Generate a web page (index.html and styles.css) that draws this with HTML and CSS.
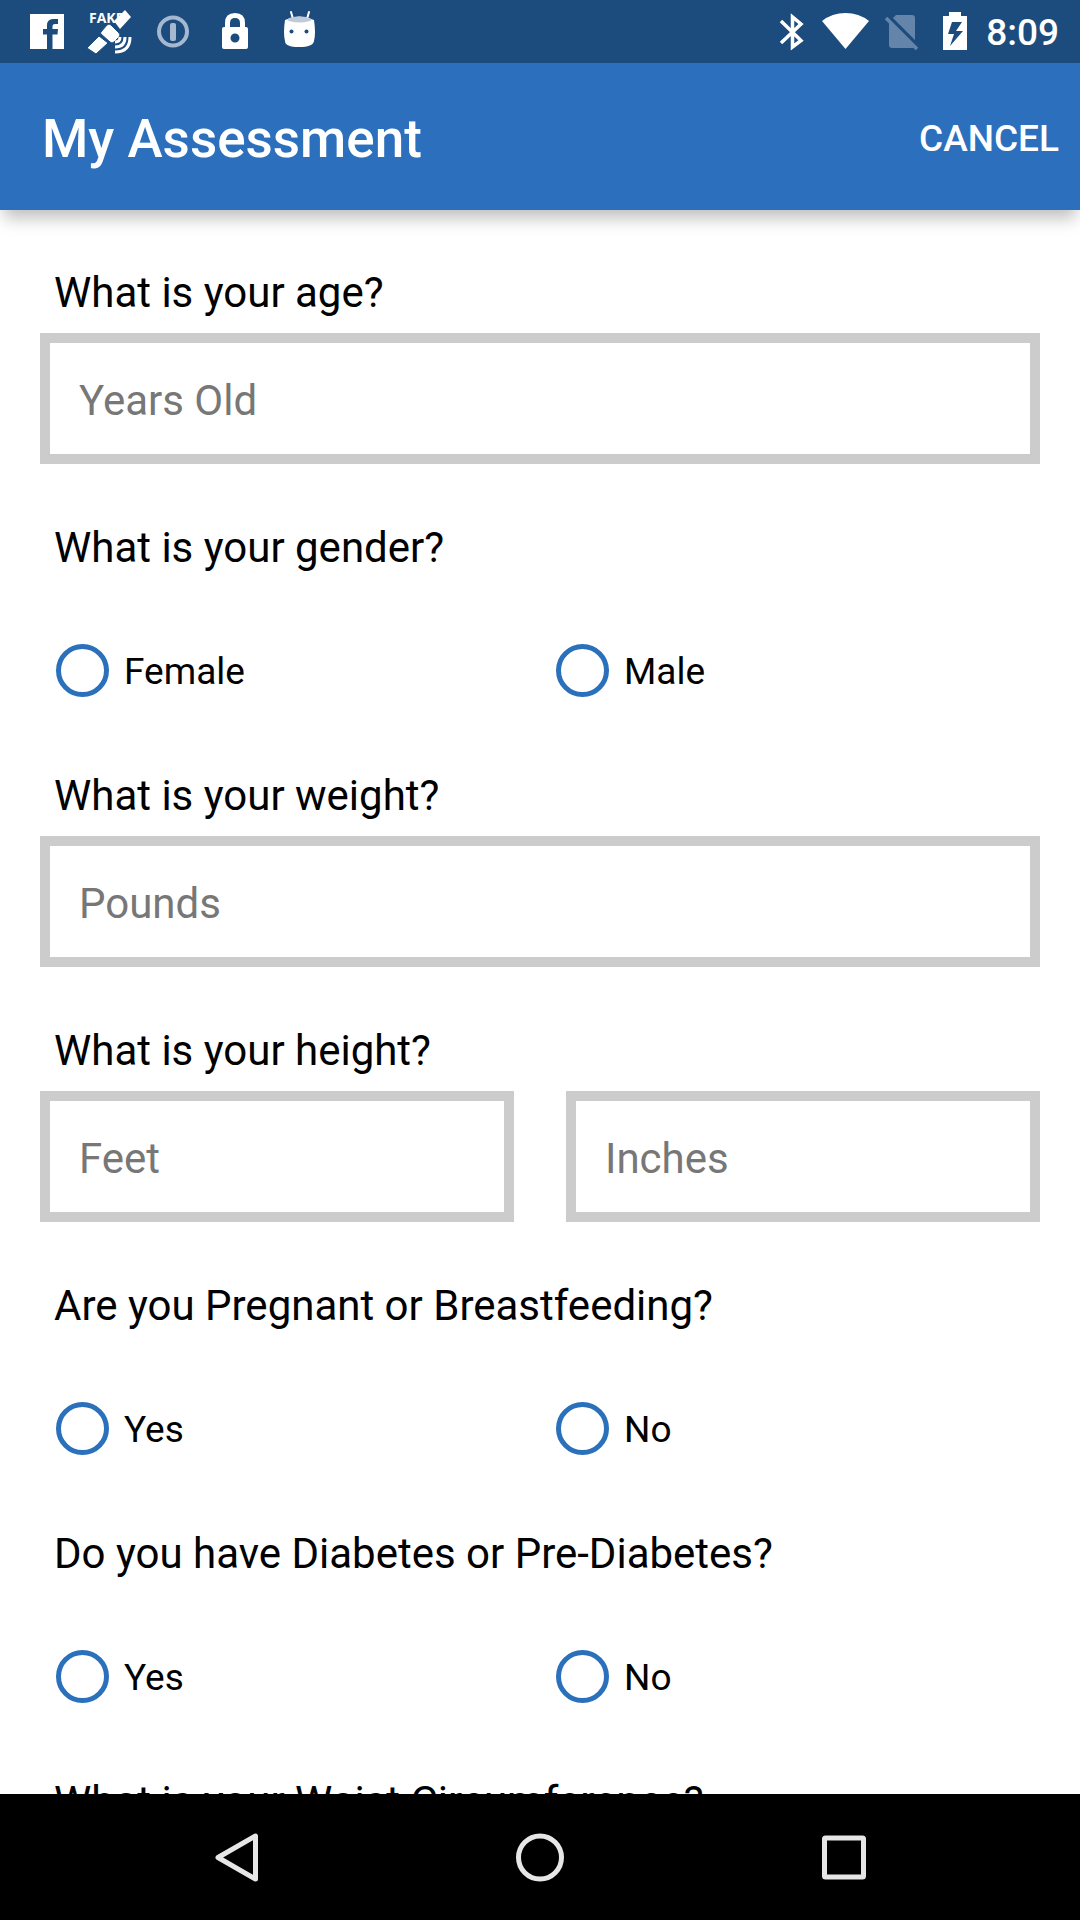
FILE: index.html
```html
<!DOCTYPE html>
<html lang="en">
<head>
<meta charset="utf-8">
<meta name="viewport" content="width=device-width, initial-scale=1">
<title>My Assessment</title>
<link rel="stylesheet" href="styles.css">
</head>
<body>
<div class="status-bar">
  <div class="status-group">
    <svg class="notice-icon" viewBox="0 0 63 63" aria-label="Facebook">
      <path fill="#fff" d="M14 14H48V49H36.500V34.500H41.500L42 29H36.500V26Q36.500 24 39 24H42V19H37Q31 19 31 25.500V29H27V34.500H31V49H14Z"/>
    </svg>
    <svg class="notice-icon" viewBox="0 0 63 63" aria-label="Mock location">
      <text class="notice-text" x="10" y="23">FAKE</text>
      <path fill="#fff" stroke="#1c4c7e" stroke-width="1" d="M8 48 20 36 29 43 17 54Z"/>
      <path fill="#fff" d="M35 21 46 10 52 17 41 29Z"/>
      <path fill="#fff" stroke="#1c4c7e" stroke-width="1" d="M22 32 28 25Q30 23 32 25L40 33Q42 35 40 37L35 42Q33 44 31 42L22 34Q21 33 22 32Z"/>
      <path fill="none" stroke="#fff" stroke-width="3" d="M51 37Q51 52 36 52M46 37Q46 47 36 47M41 37Q41 42 36 42"/>
    </svg>
    <svg class="notice-icon" viewBox="0 0 63 63" aria-label="Password manager">
      <circle cx="31" cy="31.500" r="14" fill="none" stroke="#a6b7d0" stroke-width="4"/>
      <rect x="28" y="23" width="6" height="18" rx="2" fill="#a6b7d0"/>
    </svg>
    <svg class="notice-icon" viewBox="0 0 63 63" aria-label="Locked">
      <path fill="none" stroke="#fff" stroke-width="5" d="M22.500 28V23Q22.500 15.500 30 15.500T37.500 23V28"/>
      <path fill="#fff" fill-rule="evenodd" d="M19 27H41Q43 27 43 29V47Q43 49 41 49H19Q17 49 17 47V29Q17 27 19 27ZM30 33.500A4.500 4.500 0 1 0 30 42.500A4.500 4.500 0 1 0 30 33.500Z"/>
    </svg>
    <svg class="notice-icon" viewBox="0 0 63 63" aria-label="Android">
      <path stroke="#fff" stroke-width="2" stroke-linecap="round" d="M23 12 25 19M41 12 39 19"/>
      <path fill="#fff" d="M17 20Q31 13 46 20Q48 33 46 41Q45 47 31 47T17 41Q15 33 17 20Z"/>
      <ellipse cx="31.500" cy="19.500" rx="12" ry="3" fill="#c0cad6"/>
      <circle cx="23.500" cy="31.500" r="2" fill="#1c4c7e"/>
      <circle cx="38.500" cy="31.500" r="2" fill="#1c4c7e"/>
    </svg>
  </div>
  <div class="status-group">
    <svg class="system-icon" viewBox="0 0 55 63" aria-label="Bluetooth">
      <path fill="none" stroke="#fff" stroke-width="3.500" d="M16 21 36 40.500 27.500 47V17L36 24 16 43"/>
    </svg>
    <svg class="system-icon" viewBox="0 0 55 63" aria-label="Wi-Fi">
      <path fill="#fff" d="M2 21Q12 13 25.500 13T49 21L25.500 49Z"/>
    </svg>
    <svg class="system-icon" viewBox="0 0 55 63" aria-label="No SIM card">
      <path fill="#6484a9" d="M21 15H37Q40 15 40 18V48H17Q14 48 14 45V22Z"/>
      <path stroke="#1c4c7e" stroke-width="4" d="M13 16 44 47"/>
      <path stroke="#6484a9" stroke-width="3.500" d="M11 18 42 49"/>
    </svg>
    <svg class="system-icon" viewBox="0 0 55 63" aria-label="Battery charging">
      <path fill="#fff" fill-rule="evenodd" d="M19 12H31V16H37V50H13V16H19ZM22 22 18 34H24L20 46 33 31H26L32 22Z"/>
    </svg>
    <time class="clock">8:09</time>
  </div>
</div>
<header class="app-bar">
  <h1 class="app-title">My Assessment</h1>
  <button class="cancel" type="button">CANCEL</button>
</header>
<main class="content">
  <form class="form">
    <div class="field">
      <label class="question" for="age">What is your age?</label>
      <input class="entry" id="age" type="text" inputmode="numeric" placeholder="Years Old">
    </div>
    <fieldset class="field">
      <legend class="question">What is your gender?</legend>
      <div class="choices">
        <label class="choice"><input class="radio" type="radio" name="gender"><span class="choice-text">Female</span></label>
        <label class="choice"><input class="radio" type="radio" name="gender"><span class="choice-text">Male</span></label>
      </div>
    </fieldset>
    <div class="field">
      <label class="question" for="weight">What is your weight?</label>
      <input class="entry" id="weight" type="text" inputmode="numeric" placeholder="Pounds">
    </div>
    <div class="field">
      <label class="question" for="feet">What is your height?</label>
      <div class="entry-pair">
        <input class="entry" id="feet" type="text" inputmode="numeric" placeholder="Feet">
        <input class="entry" type="text" inputmode="numeric" placeholder="Inches" aria-label="Height, inches">
      </div>
    </div>
    <fieldset class="field">
      <legend class="question">Are you Pregnant or Breastfeeding?</legend>
      <div class="choices">
        <label class="choice"><input class="radio" type="radio" name="pregnant"><span class="choice-text">Yes</span></label>
        <label class="choice"><input class="radio" type="radio" name="pregnant"><span class="choice-text">No</span></label>
      </div>
    </fieldset>
    <fieldset class="field">
      <legend class="question">Do you have Diabetes or Pre-Diabetes?</legend>
      <div class="choices">
        <label class="choice"><input class="radio" type="radio" name="diabetes"><span class="choice-text">Yes</span></label>
        <label class="choice"><input class="radio" type="radio" name="diabetes"><span class="choice-text">No</span></label>
      </div>
    </fieldset>
    <div class="field">
      <span class="question">What is your Waist Circumference?</span>
    </div>
  </form>
</main>
<nav class="nav-bar">
  <button class="nav-button" type="button" aria-label="Back">
    <svg class="nav-icon" viewBox="0 0 64 64"><path fill="none" stroke="#e6e6e6" stroke-width="5" stroke-linejoin="round" d="M51.500 11V54L14 32.500Z"/></svg>
  </button>
  <button class="nav-button" type="button" aria-label="Home">
    <svg class="nav-icon" viewBox="0 0 64 64"><circle cx="32" cy="32.500" r="21.500" fill="none" stroke="#e6e6e6" stroke-width="5"/></svg>
  </button>
  <button class="nav-button" type="button" aria-label="Recent apps">
    <svg class="nav-icon" viewBox="0 0 64 64"><rect x="12.500" y="13" width="39" height="39" rx="1" fill="none" stroke="#e6e6e6" stroke-width="5"/></svg>
  </button>
</nav>
</body>
</html>
```
FILE: styles.css
```css
* {
  box-sizing: border-box;
}

body {
  margin: 0;
  height: 100vh;
  display: flex;
  flex-direction: column;
  background: #fff;
  color: #000;
  font-family: Roboto, "Liberation Sans", sans-serif;
}

button {
  border: 0;
  padding: 0;
  background: none;
  color: inherit;
  font: inherit;
}

.status-bar {
  flex: none;
  display: flex;
  justify-content: space-between;
  padding: 0 21px 0 16px;
  background: #1c4c7e;
  color: #fff;
}

.status-group {
  display: flex;
  align-items: center;
}

.notice-icon {
  width: 63px;
  height: 63px;
}

.notice-text {
  fill: #fff;
  font-family: "Open Sans", sans-serif;
  font-size: 14px;
  font-weight: 700;
}

.system-icon {
  width: 55px;
  height: 63px;
}

.clock {
  padding: 3px 0 0 1px;
  font-size: 37px;
  font-weight: 500;
  line-height: 60px;
}

.app-bar {
  flex: none;
  position: relative;
  display: flex;
  align-items: center;
  justify-content: space-between;
  height: 147px;
  padding: 4px 21px 0 42px;
  background: #2c70bd;
  color: #fff;
  box-shadow: 0 12px 16px -4px rgba(0, 0, 0, 0.26);
}

.app-title {
  margin: 0;
  font-size: 53px;
  font-weight: 500;
}

.app-bar .cancel {
  font-size: 37px;
  font-weight: 500;
}

.content {
  flex: 1;
  min-height: 0;
  overflow-y: auto;
  scrollbar-width: none;
}

.form {
  display: flex;
  flex-direction: column;
  gap: 59px;
  padding: 58px 40px;
}

.field {
  display: flex;
  flex-direction: column;
  gap: 15px;
  min-width: 0;
  margin: 0;
  padding: 0;
  border: 0;
}

.question {
  padding: 0 14px;
  font-size: 42px;
  line-height: 50px;
}

.entry {
  width: 100%;
  min-width: 0;
  height: 131px;
  padding: 3px 29px 0;
  border: 10px solid #ccc;
  border-radius: 0;
  background: #fff;
  color: #000;
  font: inherit;
  font-size: 42px;
  outline: 0;
}

.entry::placeholder {
  color: #777;
  opacity: 1;
}

.entry-pair {
  display: grid;
  grid-template-columns: 1fr 1fr;
  gap: 52px;
}

.choices {
  display: grid;
  grid-template-columns: 1fr 1fr;
  padding-top: 55px;
}

.choice {
  display: flex;
  align-items: center;
  gap: 15px;
  height: 84px;
  padding-left: 16px;
  font-size: 37px;
}

.choice-text {
  padding-top: 3px;
}

.radio {
  appearance: none;
  width: 53px;
  height: 53px;
  margin: 0;
  border: 5px solid #2a70bb;
  border-radius: 50%;
}

.radio:checked {
  background: radial-gradient(circle, #2a70bb 50%, transparent 54%);
}

.nav-bar {
  flex: none;
  display: grid;
  grid-template-columns: repeat(3, 1fr);
  height: 126px;
  padding: 0 84px;
  background: #000;
}

.nav-button {
  display: flex;
  align-items: center;
  justify-content: center;
}

.nav-icon {
  width: 64px;
  height: 64px;
}
```
